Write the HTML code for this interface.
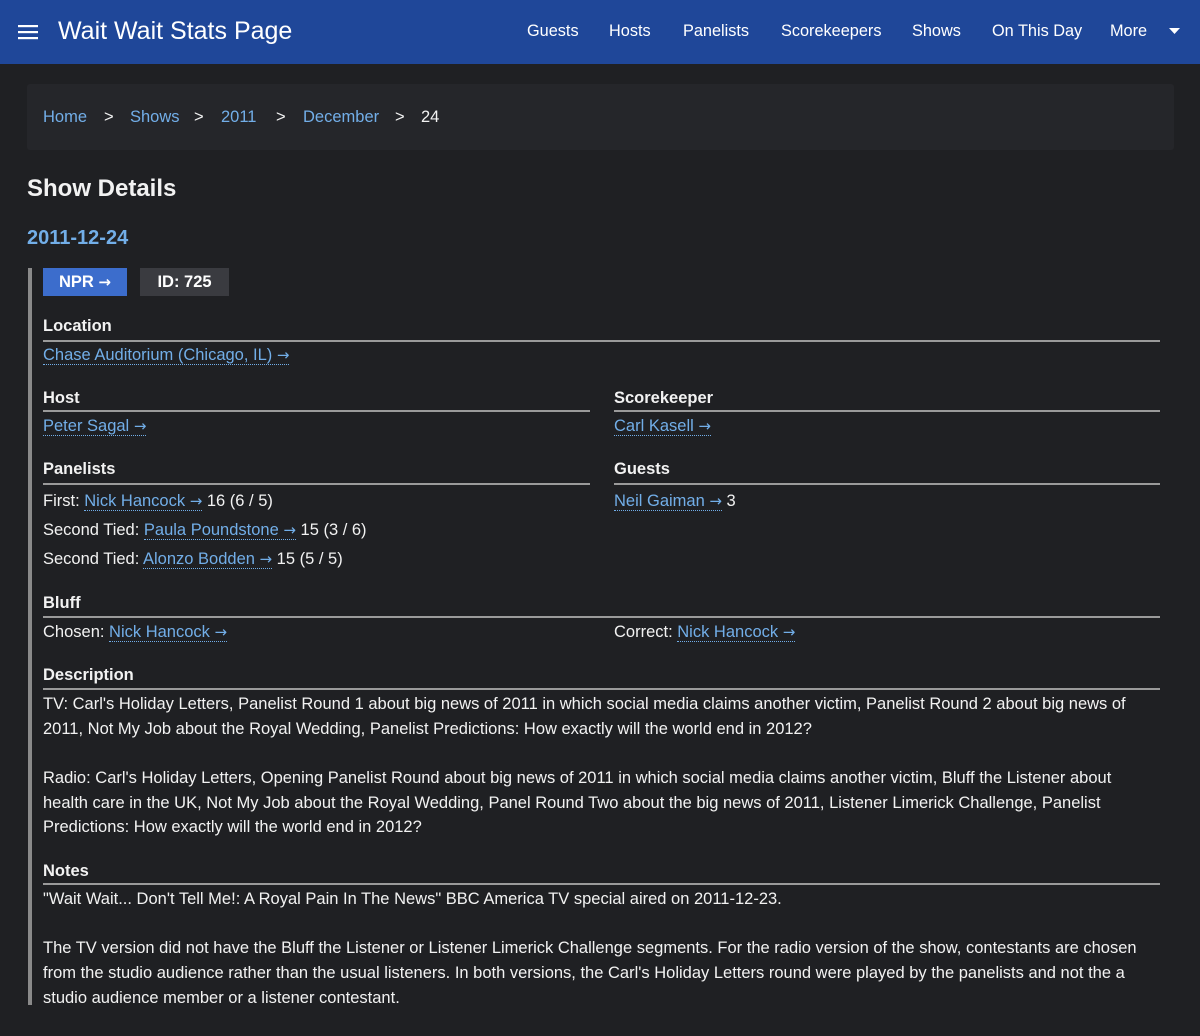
<!DOCTYPE html>
<html><head><meta charset="utf-8">
<style>
*{margin:0;padding:0;box-sizing:border-box}
body{width:1200px;height:1036px;background:#1f2023;color:#f2f2f2;font-family:"Liberation Sans",sans-serif;font-size:16.5px;position:relative;overflow:hidden}
.a{position:absolute;white-space:nowrap;line-height:24px;margin-top:1px}
.l{color:#72aee8;text-decoration:none;border-bottom:1px dotted #72aee8}
.ar{font-family:"DejaVu Sans",sans-serif;font-size:15px}
.hdr{position:absolute;left:0;top:0;width:1200px;height:64px;background:#1f4799}
.nav{position:absolute;top:20px;font-size:16.3px;color:#fff;line-height:22px}
.h{font-weight:bold;font-size:16.5px;margin-top:-1px}
.rule{position:absolute;height:2px;background:#9a9a9a}
</style></head><body>
<div class="hdr">
 <svg style="position:absolute;left:18px;top:24px" width="20" height="16"><rect y="1" width="20" height="2.2" fill="#fff"/><rect y="7" width="20" height="2.2" fill="#fff"/><rect y="13" width="20" height="2.2" fill="#fff"/></svg>
 <div class="a" style="left:58px;top:15px;font-size:25px;line-height:30px;color:#fff">Wait Wait Stats Page</div>
 <div class="nav" style="left:527px">Guests</div>
 <div class="nav" style="left:609px">Hosts</div>
 <div class="nav" style="left:683px">Panelists</div>
 <div class="nav" style="left:781px">Scorekeepers</div>
 <div class="nav" style="left:912px">Shows</div>
 <div class="nav" style="left:992px">On This Day</div>
 <div class="nav" style="left:1110px">More</div>
 <svg style="position:absolute;left:1169px;top:28px" width="11" height="7"><path d="M0 0H11L5.5 6Z" fill="#fff"/></svg>
</div>
<div style="position:absolute;left:27px;top:84px;width:1147px;height:66px;background:#25262a;border-radius:3px"></div>
<div class="a" style="left:43px;top:104px;color:#72aee8">Home</div>
<div class="a" style="left:104px;top:104px">&gt;</div>
<div class="a" style="left:130px;top:104px;color:#72aee8">Shows</div>
<div class="a" style="left:194px;top:104px">&gt;</div>
<div class="a" style="left:221px;top:104px;color:#72aee8">2011</div>
<div class="a" style="left:276px;top:104px">&gt;</div>
<div class="a" style="left:303px;top:104px;color:#72aee8">December</div>
<div class="a" style="left:395px;top:104px">&gt;</div>
<div class="a" style="left:421px;top:104px">24</div>

<div class="a" style="left:27px;top:174px;font-size:24px;line-height:28px;font-weight:bold">Show Details</div>
<div class="a" style="left:27px;top:224px;font-size:20px;line-height:26px;font-weight:bold;color:#72aee8">2011-12-24</div>

<div style="position:absolute;left:28px;top:268px;width:4px;height:737px;background:#8a8a8a"></div>
<div style="position:absolute;left:43px;top:268px;width:84px;height:28px;background:#3c6dcc;color:#fff;font-weight:bold;text-align:center;line-height:28px">NPR <span class="ar">→</span></div>
<div style="position:absolute;left:140px;top:268px;width:89px;height:28px;background:#3a3b40;color:#fff;font-weight:bold;text-align:center;line-height:28px">ID: 725</div>

<div class="a h" style="left:43px;top:315px">Location</div>
<div class="rule" style="left:43px;top:340px;width:1117px"></div>
<div class="a" style="left:43px;top:342px"><span class="l">Chase Auditorium (Chicago, IL) <span class="ar">→</span></span></div>

<div class="a h" style="left:43px;top:387px">Host</div>
<div class="rule" style="left:43px;top:410px;width:547px"></div>
<div class="a" style="left:43px;top:413px"><span class="l">Peter Sagal <span class="ar">→</span></span></div>
<div class="a h" style="left:614px;top:387px">Scorekeeper</div>
<div class="rule" style="left:614px;top:410px;width:546px"></div>
<div class="a" style="left:614px;top:413px"><span class="l">Carl Kasell <span class="ar">→</span></span></div>

<div class="a h" style="left:43px;top:458px">Panelists</div>
<div class="rule" style="left:43px;top:483px;width:547px"></div>
<div class="a" style="left:43px;top:488px">First: <span class="l">Nick Hancock <span class="ar">→</span></span> 16 (6 / 5)</div>
<div class="a" style="left:43px;top:517px">Second Tied: <span class="l">Paula Poundstone <span class="ar">→</span></span> 15 (3 / 6)</div>
<div class="a" style="left:43px;top:546px">Second Tied: <span class="l">Alonzo Bodden <span class="ar">→</span></span> 15 (5 / 5)</div>
<div class="a h" style="left:614px;top:458px">Guests</div>
<div class="rule" style="left:614px;top:483px;width:546px"></div>
<div class="a" style="left:614px;top:488px"><span class="l">Neil Gaiman <span class="ar">→</span></span> 3</div>

<div class="a h" style="left:43px;top:592px">Bluff</div>
<div class="rule" style="left:43px;top:616px;width:1117px"></div>
<div class="a" style="left:43px;top:619px">Chosen: <span class="l">Nick Hancock <span class="ar">→</span></span></div>
<div class="a" style="left:614px;top:619px">Correct: <span class="l">Nick Hancock <span class="ar">→</span></span></div>

<div class="a h" style="left:43px;top:664px">Description</div>
<div class="rule" style="left:43px;top:688px;width:1117px"></div>
<div class="a" style="left:43px;top:691px;line-height:24.6px">TV: Carl's Holiday Letters, Panelist Round 1 about big news of 2011 in which social media claims another victim, Panelist Round 2 about big news of<br>2011, Not My Job about the Royal Wedding, Panelist Predictions: How exactly will the world end in 2012?</div>
<div class="a" style="left:43px;top:765px;line-height:24.6px">Radio: Carl's Holiday Letters, Opening Panelist Round about big news of 2011 in which social media claims another victim, Bluff the Listener about<br>health care in the UK, Not My Job about the Royal Wedding, Panel Round Two about the big news of 2011, Listener Limerick Challenge, Panelist<br>Predictions: How exactly will the world end in 2012?</div>

<div class="a h" style="left:43px;top:860px">Notes</div>
<div class="rule" style="left:43px;top:883px;width:1117px"></div>
<div class="a" style="left:43px;top:886px">"Wait Wait... Don't Tell Me!: A Royal Pain In The News" BBC America TV special aired on 2011-12-23.</div>
<div class="a" style="left:43px;top:935px;line-height:24.8px">The TV version did not have the Bluff the Listener or Listener Limerick Challenge segments. For the radio version of the show, contestants are chosen<br>from the studio audience rather than the usual listeners. In both versions, the Carl's Holiday Letters round were played by the panelists and not the a<br>studio audience member or a listener contestant.</div>
</body></html>
